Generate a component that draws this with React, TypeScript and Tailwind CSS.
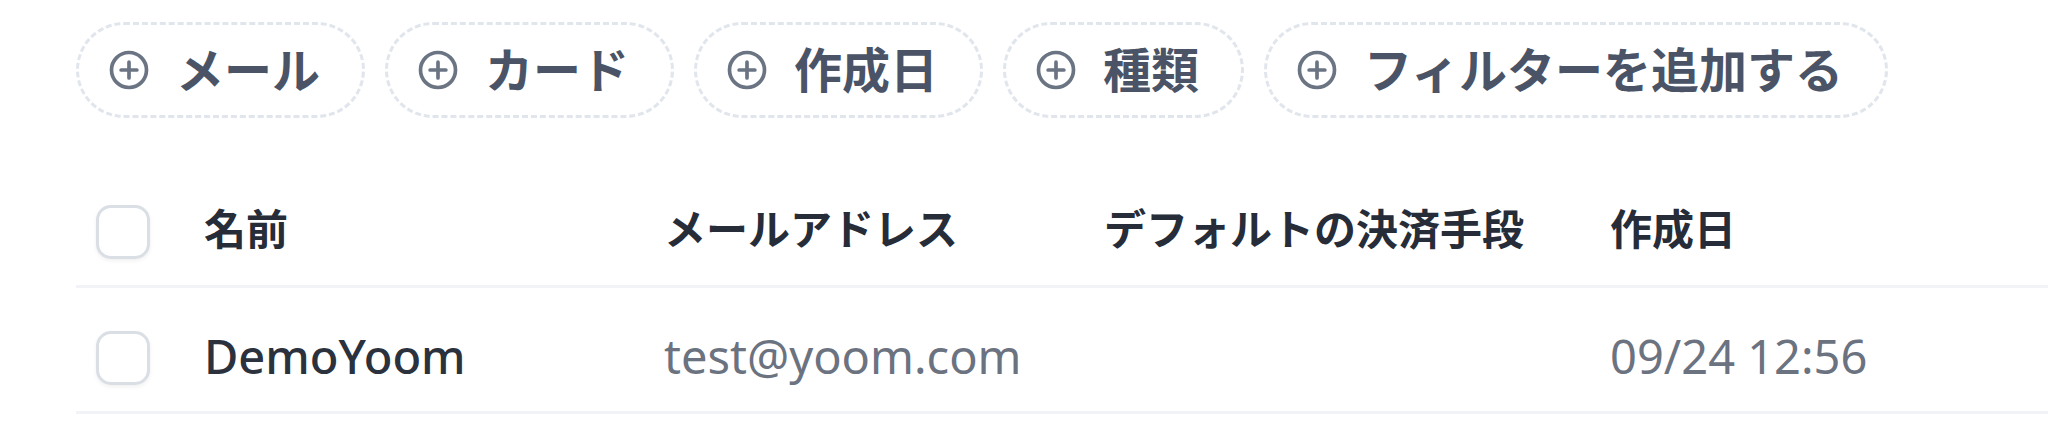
const chips = ["メール", "カード", "作成日", "種類", "フィルターを追加する"];

function PlusCircle() {
  return (
    <svg width="42" height="42" viewBox="0 0 24 24" fill="none" stroke="#6b7483" strokeWidth="2.1" strokeLinecap="round">
      <circle cx="12" cy="12" r="10" />
      <path d="M12 7.5v9M7.5 12h9" />
    </svg>
  );
}

function Checkbox() {
  return (
    <div className="w-[54px] h-[54px] shrink-0 rounded-[15px] border-[3px] border-[#dadee5] bg-white shadow-[0_2px_4px_rgba(15,23,42,0.06)]" />
  );
}

export default function App() {
  return (
    <div
      className="w-[2048px] h-[432px] bg-white overflow-hidden pl-[76px]"
      style={{ fontFamily: '"Noto Sans", "Noto Sans CJK JP", sans-serif' }}
    >
      <div className="flex gap-[20px] pt-[22px]">
        {chips.map((c) => (
          <div
            key={c}
            className="h-[96px] flex items-center gap-[26px] pl-[29px] pr-[42px] rounded-full border-[3px] border-dashed border-[#e1e5ec]"
          >
            <PlusCircle />
            <span className="text-[48px] leading-none font-bold text-[#4a5466]">{c}</span>
          </div>
        ))}
      </div>

      <div className="mt-[87px]">
        <div className="flex items-center pb-[26px] border-b-[3px] border-[#f1f3f6] text-[42px] leading-none font-bold text-[#262c38]">
          <div className="w-[128px] pl-[20px]">
            <Checkbox />
          </div>
          <div className="w-[460px] -mt-[6px]">名前</div>
          <div className="w-[440px] -mt-[6px]">メールアドレス</div>
          <div className="w-[506px] -mt-[6px]">デフォルトの決済手段</div>
          <div className="-mt-[6px]">作成日</div>
        </div>

        <div className="flex items-center pt-[43px] pb-[26px] border-b-[3px] border-[#f1f3f6] text-[47px] leading-none">
          <div className="w-[128px] pl-[20px]">
            <Checkbox />
          </div>
          <div className="w-[460px] font-medium text-[#2b313d] -mt-[4px]">DemoYoom</div>
          <div className="w-[440px] text-[#6b7280] -mt-[4px]">test@yoom.com</div>
          <div className="w-[506px]" />
          <div className="text-[#6b7280] -mt-[4px]">09/24 12:56</div>
        </div>
      </div>
    </div>
  );
}
